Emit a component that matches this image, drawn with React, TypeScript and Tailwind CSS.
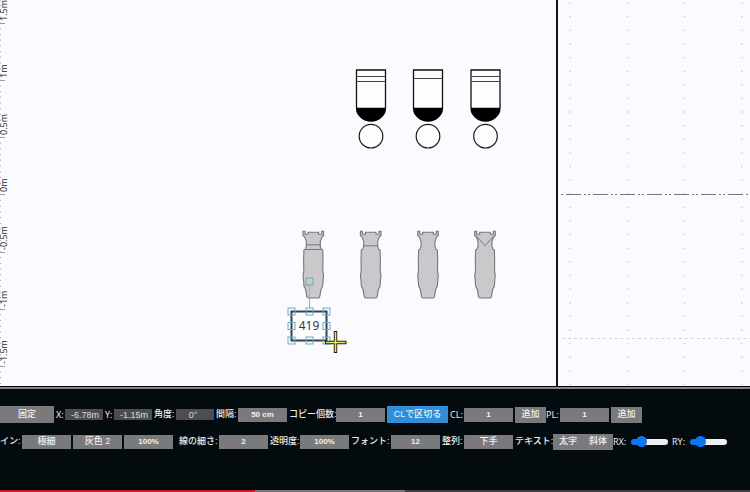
import { useState } from 'react';
import type { ReactNode } from 'react';

const rulerMarks = [
  { y: 23, label: '1.5m' },
  { y: 80, label: '1m' },
  { y: 137, label: '0.5m' },
  { y: 194, label: '0m' },
  { y: 252, label: '-0.5m' },
  { y: 309, label: '-1m' },
  { y: 366, label: '-1.5m' },
];

const lamps = [
  { x: 371, lines: [76.5, 81.5] },
  { x: 428, lines: [78.5] },
  { x: 485.5, lines: [76.5, 81.5] },
];

const spots = [
  { x: 313.3, detail: 'M-7.5 13.5H7.5M-7.5 18.2H7.5' },
  { x: 370.7, detail: 'M-7 14.5H7' },
  { x: 428, detail: '' },
  { x: 485, detail: 'M-9 4.5L0 14.5L9 4.5' },
];

const handles = [
  [291.5, 311.5],
  [309.5, 311.5],
  [326.5, 311.5],
  [291.5, 326],
  [326.5, 326],
  [291.5, 340.5],
  [309.5, 340.5],
  [326.5, 340.5],
  [309.5, 281.5],
];

const spotPath =
  'M-10.3 0H-8.3V3H-5.3V1H5.3V3H8.3V0H10.3V4.5L8.7 5.5L7 10V15L8 18L9.4 18.7L9.7 30L9.5 41L10.3 42.5L9.7 50L9.3 55L7.7 58L6.5 65Q6.4 66.7 5 66.7H-5Q-6.4 66.7 -6.5 65L-7.7 58L-9.3 55L-9.7 50L-10.3 42.5L-9.5 41L-9.7 30L-9.4 18.7L-8 18L-7 15V10L-8.7 5.5L-10.3 4.5Z';

function Ruler() {
  const ticks = Array.from({ length: 68 }, (_, i) => 0.1 + i * 5.72);
  return (
    <g>
      {ticks.map((y) => (
        <path key={y} d={`M0 ${y}H1`} stroke="#a0a0a5" strokeWidth="1" />
      ))}
      {rulerMarks.map((mark) => (
        <g key={mark.label}>
          <path d={`M0 ${mark.y + 0.5}H5`} stroke="#a0a0a5" />
          <text
            transform={`translate(7 ${mark.y - 2}) rotate(-90)`}
            className="fill-[#26262a] font-['Open_Sans','Noto_Sans',sans-serif] text-[9px]"
          >
            {mark.label}
          </text>
        </g>
      ))}
    </g>
  );
}

function Lamp({ x, lines }: { x: number; lines: number[] }) {
  return (
    <g transform={`translate(${x} 0)`}>
      <path d="M-14.5 108V70H14.5V108" fill="#fdfdfe" stroke="#111" strokeWidth="1.3" />
      {lines.map((y) => (
        <path key={y} d={`M-14.5 ${y}H14.5`} stroke="#444" strokeWidth="1" />
      ))}
      <path d="M-15 107.7H15V109C15 115.5 8 121.7 0 121.7S-15 115.5 -15 109Z" fill="#000" />
      <circle cx="0" cy="136.2" r="11.8" fill="#fdfdfe" stroke="#1a1a1a" strokeWidth="1.2" />
    </g>
  );
}

function Stage() {
  return (
    <svg className="absolute inset-0 h-full w-full" aria-label="stage">
      <Ruler />
      {lamps.map((lamp) => (
        <Lamp key={lamp.x} {...lamp} />
      ))}
      {spots.map((spot) => (
        <g key={spot.x} transform={`translate(${spot.x} 231.3)`} stroke="#77777b" fill="none">
          <path d={spotPath} fill="#c9c9cb" strokeWidth="1.1" />
          <path d={spot.detail} />
        </g>
      ))}

      {/* Selected label */}
      <rect x="291.5" y="311.5" width="35" height="29" fill="#fdfdfe" stroke="#2b4654" strokeWidth="2" />
      <text
        x="309"
        y="330"
        textAnchor="middle"
        className="fill-[#3a3a3e] font-['Noto_Sans',sans-serif] text-[12px]"
      >
        419
      </text>
      <path d="M309.5 285V308" stroke="#8fb6c8" />
      {handles.map(([x, y]) => (
        <rect key={`${x}-${y}`} x={x - 3.5} y={y - 3.5} width="7" height="7" fill="none" stroke="#6fa9c0" />
      ))}

      {/* Cursor */}
      <path d="M335.5 331V353M325 342.5H346.5" stroke="#1c1c10" strokeWidth="3.4" />
      <path d="M335.5 332V352M326 342.5H345.5" stroke="#ece65c" strokeWidth="1.6" />
    </svg>
  );
}

function GridPanel() {
  return (
    <svg className="absolute inset-0 h-full w-full" aria-label="grid">
      {[12, 69.5, 126.5, 184].map((x) => (
        <path key={x} d={`M${x} 2.4V2000`} stroke="#c2c2ca" strokeWidth="1.2" strokeDasharray="1.4 12.22" />
      ))}
      <path
        d="M3 194.5H4000"
        stroke="#77777c"
        strokeWidth="1.2"
        strokeDasharray="2 3 15 3 2 2"
      />
      <path d="M4 338.5H4000" stroke="#d4d4da" strokeDasharray="3 2.85" />
    </svg>
  );
}

function Label({ className, htmlFor, children }: { className: string; htmlFor: string; children: ReactNode }) {
  return (
    <label htmlFor={htmlFor} className={`shrink-0 whitespace-nowrap ${className}`}>
      {children}
    </label>
  );
}

function Coord({ id, value, align = 'text-right' }: { id: string; value: string; align?: string }) {
  return (
    <input
      id={id}
      defaultValue={value}
      className={`h-[11px] w-[38px] shrink-0 bg-[#4b4d50] pr-1 text-[#dcdcdc] ${align}`}
    />
  );
}

function Value({ id, text = 'text-[8px] font-bold', children }: { id: string; text?: string; children: ReactNode }) {
  return (
    <button
      id={id}
      className={`flex h-3.5 w-[49px] shrink-0 items-center justify-center whitespace-nowrap bg-[#7a7a7c] text-[#f0f0f0] ${text}`}
    >
      {children}
    </button>
  );
}

function Action({ id, className, children }: { id?: string; className: string; children: ReactNode }) {
  return (
    <button
      id={id}
      className={`flex shrink-0 items-center justify-center whitespace-nowrap font-medium text-[#f0f0f0] ${className}`}
    >
      {children}
    </button>
  );
}

function Slider({ id }: { id: string }) {
  const [value, setValue] = useState(20);
  return (
    <input
      id={id}
      type="range"
      value={value}
      onChange={(e) => setValue(Number(e.target.value))}
      style={{ backgroundImage: `linear-gradient(to right, #0a78f5 ${value + 8}%, #efeff2 ${value + 8}%)` }}
      className="h-1.5 w-[37px] shrink-0 appearance-none rounded-full [&::-webkit-slider-thumb]:size-[11px] [&::-webkit-slider-thumb]:appearance-none [&::-webkit-slider-thumb]:rounded-full [&::-webkit-slider-thumb]:bg-[#0a78f5]"
    />
  );
}

export default function App() {
  return (
    <div className="flex min-h-screen flex-col overflow-hidden bg-[#040b0f]">
      <main className="flex flex-1 bg-[#fbfaff]">
        <div className="relative min-w-0 flex-1 border-r-2 border-[#151515]">
          <Stage />
        </div>
        <div className="relative w-48">
          <GridPanel />
        </div>
      </main>

      <div className="border-t border-black">
        <div className="h-0.5 bg-[#85868b]" />
        <div className="flex flex-col gap-2.5 pt-[17px] pb-10 font-['Liberation_Sans','Noto_Sans_CJK_JP',sans-serif] text-[9px] leading-none text-[#ececec]">
          <div className="flex h-[17px] items-center gap-0.5">
            <Action className="h-[17px] w-[54px] bg-[#7a7a7c]">固定</Action>
            <Label htmlFor="x" className="w-[7px] font-['Noto_Sans',sans-serif]">X:</Label>
            <Coord id="x" value="-6.78m" />
            <Label htmlFor="y" className="w-[7px] font-['Noto_Sans',sans-serif]">Y:</Label>
            <Coord id="y" value="-1.15m" />
            <Label htmlFor="angle" className="w-5 font-medium">角度:</Label>
            <Coord id="angle" value="0°" align="text-center" />
            <Label htmlFor="spacing" className="w-5 font-medium">間隔:</Label>
            <Value id="spacing">50 cm</Value>
            <Label htmlFor="copies" className="w-[45px] font-medium">コピー個数:</Label>
            <Value id="copies">1</Value>
            <Action className="h-[17px] w-[61px] bg-[#318dd6]">CLで区切る</Action>
            <Label htmlFor="cl" className="w-3 font-['Noto_Sans',sans-serif]">CL:</Label>
            <Value id="cl">1</Value>
            <Action className="h-4 w-[31px] bg-[#7a7a7c]">追加</Action>
            <Label htmlFor="pl" className="-ml-0.5 w-3 font-['Noto_Sans',sans-serif]">PL:</Label>
            <Value id="pl">1</Value>
            <Action className="h-4 w-[31px] bg-[#7a7a7c]">追加</Action>
          </div>

          <div className="flex h-[17px] items-center gap-0.5">
            <Label htmlFor="line" className="w-5 font-medium">イン:</Label>
            <Value id="line" text="font-medium">極細</Value>
            <Value id="color" text="font-medium">灰色 2</Value>
            <Value id="scale">100%</Value>
            <Label htmlFor="stroke" className="ml-1 w-[38px] font-medium">線の細さ:</Label>
            <Value id="stroke">2</Value>
            <Label htmlFor="opacity" className="w-7 font-medium">透明度:</Label>
            <Value id="opacity">100%</Value>
            <Label htmlFor="font" className="w-[38px] font-medium">フォント:</Label>
            <Value id="font">12</Value>
            <Label htmlFor="align" className="w-5 font-medium">整列:</Label>
            <Value id="align" text="font-medium">下手</Value>
            <Label htmlFor="bold" className="w-[38px] font-medium">テキスト:</Label>
            <div className="-ml-0.5 flex">
              <Action id="bold" className="h-4 w-[30px] bg-[#7a7a7c]">太字</Action>
              <Action className="h-4 w-[30px] bg-[#7a7a7c]">斜体</Action>
            </div>
            <Label htmlFor="rx" className="-ml-0.5 w-4 font-['Noto_Sans',sans-serif]">RX:</Label>
            <Slider id="rx" />
            <Label htmlFor="ry" className="ml-0.5 w-4 font-['Noto_Sans',sans-serif]">RY:</Label>
            <Slider id="ry" />
          </div>
        </div>
        <div className="flex h-0.5 bg-[#3c3e40]">
          <div className="w-[34%] bg-[#c41c1a]" />
          <div className="w-[20%] bg-[#77787a]" />
        </div>
      </div>
    </div>
  );
}
